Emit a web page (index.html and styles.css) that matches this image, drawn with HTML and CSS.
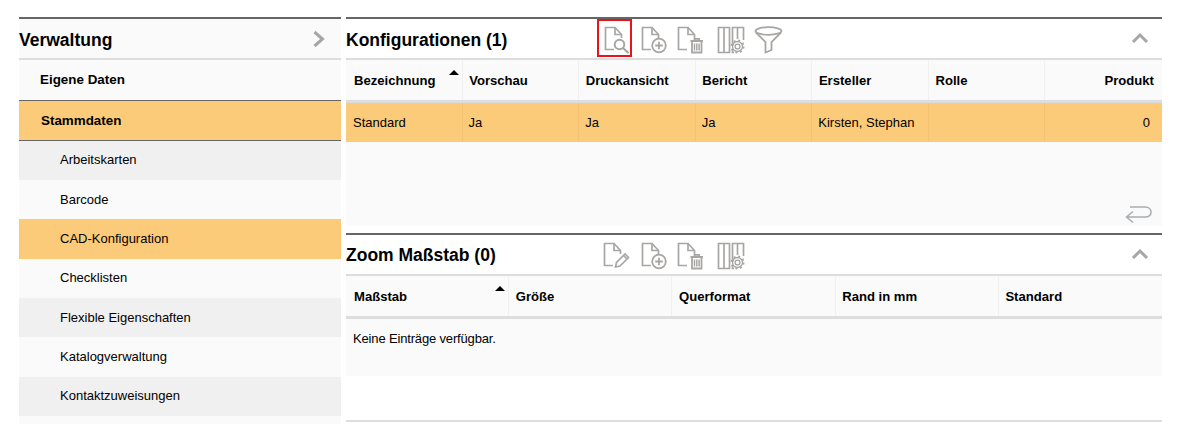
FILE: index.html
```html
<!DOCTYPE html>
<html lang="de">
<head>
<meta charset="utf-8">
<title>Verwaltung</title>
<link rel="stylesheet" href="styles.css">
</head>
<body>
<svg class="defs" width="0" height="0" aria-hidden="true">
  <defs>
    <g id="sheet" fill="none" stroke="#a8a6a4" stroke-width="1.7">
      <path d="M10 23.5H1.5V1.5H11L17.5 8.5V12"/>
      <path d="M11 1.5V8.5H17.5"/>
    </g>
    <g id="plus" fill="none" stroke="#a8a6a4" stroke-width="1.8">
      <circle cx="18" cy="19.5" r="6.8"/>
      <path d="M14.2 19.5H21.8M18 15.7V23.3"/>
    </g>
    <g id="trash" fill="none" stroke="#a8a6a4" stroke-width="1.8">
      <path d="M13.5 15H26M17.5 15V12.8H22V15"/>
      <path d="M15 15V26.5H24.5V15"/>
      <path d="M17.5 17.5V24.5M19.8 17.5V24.5M22.1 17.5V24.5" stroke-width="1.5"/>
    </g>
    <g id="cols" fill="none" stroke="#a8a6a4" stroke-width="1.7">
      <path d="M1.5 1.5H7V26.5H1.5ZM7 1.5H12.5V26.5H7Z"/>
      <path d="M15.5 20V1.5H20.5V13M20.5 1.5H26.5V14M15.5 1.5H26.5"/>
      <path d="M15.5 23V26.5H17"/>
      <circle cx="20.5" cy="20.5" r="2.4" stroke-width="1.4"/>
      <circle cx="20.5" cy="20.5" r="5" stroke-width="1.3"/>
      <circle cx="20.5" cy="20.5" r="6.2" stroke-dasharray="2 2.87" stroke-width="1.6"/>
    </g>
  </defs>
</svg>
<div class="app">
  <aside class="side">
    <div class="side-head">
      <h2 class="title">Verwaltung</h2>
      <svg class="chev" width="14" height="18" viewBox="0 0 14 18"><path d="M2.5 2L10.5 9L2.5 16" fill="none" stroke="#a6a6a6" stroke-width="3"/></svg>
    </div>
    <a class="lvl1 own">Eigene Daten</a>
    <a class="lvl1 open">Stammdaten</a>
    <a class="lvl2 even">Arbeitskarten</a>
    <a class="lvl2">Barcode</a>
    <a class="lvl2 on">CAD-Konfiguration</a>
    <a class="lvl2">Checklisten</a>
    <a class="lvl2 even">Flexible Eigenschaften</a>
    <a class="lvl2">Katalogverwaltung</a>
    <a class="lvl2 even">Kontaktzuweisungen</a>
    <div class="side-rest"></div>
  </aside>
  <main class="main">
    <section class="panel first">
      <header class="phead">
        <h2 class="title ptitle">Konfigurationen (1)</h2>
        <div class="tools tools-a">
          <span class="tool selected">
            <svg width="26" height="28" viewBox="0 0 26 28"><use href="#sheet"/><g fill="none" stroke="#a8a6a4"><circle cx="15.5" cy="18.5" r="4.8" stroke-width="2"/><path d="M19 22L24.5 27" stroke-width="2.2"/></g></svg>
          </span>
          <span class="tool step36"><svg width="28" height="28" viewBox="0 0 28 28"><use href="#sheet"/><use href="#plus"/></svg></span>
          <span class="tool step40"><svg width="28" height="28" viewBox="0 0 28 28"><use href="#sheet"/><use href="#trash"/></svg></span>
          <span class="tool"><svg width="28" height="28" viewBox="0 0 28 28"><use href="#cols"/></svg></span>
          <span class="tool"><svg width="30" height="28" viewBox="0 0 30 28"><g fill="none" stroke="#a8a6a4" stroke-width="1.8"><ellipse cx="14.5" cy="5" rx="13" ry="3.8"/><path d="M2 6.5L11.5 16V26.5L17.5 24V16L27 6.5"/></g></svg></span>
        </div>
        <svg class="collapse" width="18" height="12" viewBox="0 0 18 12"><path d="M2 10L9 3L16 10" fill="none" stroke="#a6a6a6" stroke-width="3"/></svg>
      </header>
      <div class="tbl-wrap wrap-a">
        <div class="grid seven thead">
          <div class="th">Bezeichnung<i class="sort"></i></div>
          <div class="th">Vorschau</div>
          <div class="th">Druckansicht</div>
          <div class="th">Bericht</div>
          <div class="th">Ersteller</div>
          <div class="th">Rolle</div>
          <div class="th right">Produkt</div>
        </div>
        <div class="grid seven row">
          <div class="td">Standard</div>
          <div class="td">Ja</div>
          <div class="td">Ja</div>
          <div class="td">Ja</div>
          <div class="td">Kirsten, Stephan</div>
          <div class="td"></div>
          <div class="td right">0</div>
        </div>
        <svg class="back" width="27" height="21" viewBox="0 0 27 21"><path d="M5 3H20C24 3 26 5.5 26 8C26 11 24 13 20 13H2M8 7.5L1.5 13L8 18.5" fill="none" stroke="#a9adb0" stroke-width="1.5"/></svg>
      </div>
    </section>
    <section class="panel second">
      <header class="phead phead-b">
        <h2 class="title ptitle">Zoom Maßstab (0)</h2>
        <div class="tools tools-b">
          <span class="tool step38"><svg width="28" height="28" viewBox="0 0 28 28"><use href="#sheet"/><path d="M12.5 25L13.5 20.5L22 12L25.5 15.5L17 24ZM20.5 13.5L24 17" fill="none" stroke="#a8a6a4" stroke-width="1.7"/></svg></span>
          <span class="tool step36"><svg width="28" height="28" viewBox="0 0 28 28"><use href="#sheet"/><use href="#plus"/></svg></span>
          <span class="tool step40"><svg width="28" height="28" viewBox="0 0 28 28"><use href="#sheet"/><use href="#trash"/></svg></span>
          <span class="tool"><svg width="28" height="28" viewBox="0 0 28 28"><use href="#cols"/></svg></span>
        </div>
        <svg class="collapse" width="18" height="12" viewBox="0 0 18 12"><path d="M2 10L9 3L16 10" fill="none" stroke="#a6a6a6" stroke-width="3"/></svg>
      </header>
      <div class="tbl-wrap wrap-b">
        <div class="grid five thead">
          <div class="th">Maßstab<i class="sort"></i></div>
          <div class="th">Größe</div>
          <div class="th">Querformat</div>
          <div class="th">Rand in mm</div>
          <div class="th">Standard</div>
        </div>
        <p class="empty">Keine Einträge verfügbar.</p>
      </div>
    </section>
    <div class="end-line"></div>
  </main>
</div>
</body>
</html>
```
FILE: styles.css
```css
* { box-sizing: border-box; }
html, body { margin: 0; padding: 0; height: 424px; overflow: hidden; background: #fff; }
body { font-family: "Liberation Sans", Arial, sans-serif; font-size: 13px; color: #000; }
.defs { position: absolute; }
.app { display: flex; gap: 5px; padding: 17px 21px 0 19px; height: 424px; }

.side { width: 322px; display: flex; flex-direction: column; border-top: 2px solid #666; }
.side-head { height: 41px; display: flex; align-items: center; justify-content: space-between; padding: 2px 15px 0 0; background: #fafafa; border-bottom: 2px solid #ddd; }
.title { margin: 0; font-size: 17.5px; font-weight: bold; line-height: 20px; }
.chev { display: block; margin-top: -2px; }

.lvl1, .lvl2 { display: flex; align-items: center; flex: none; font-size: 13px; }
.lvl1 { font-weight: bold; font-size: 13.4px; background: #fafafa; border-bottom: 1px solid #666; padding-left: 21px; }
.own { height: 41px; padding-bottom: 2px; }
.open { height: 39.7px; background: #fccb7a; padding-left: 22px; }
.lvl2 { height: 39.33px; padding: 0 0 1px 41px; background: #fafafa; }
.lvl2.even { background: #f0f0f0; }
.lvl2.on { background: #fccb7a; }
.side-rest { flex: 1; background: #fafafa; }

.main { width: 816px; display: flex; flex-direction: column; }
.panel { border-top: 2px solid #666; flex: none; }
.first { height: 209px; }
.second { margin-top: 7px; }
.phead { height: 41px; display: flex; align-items: center; padding-top: 2px; border-bottom: 2px solid #ddd; position: relative; }
.phead-b { padding-top: 0; }
.ptitle { flex: none; }
.tools { position: absolute; top: 7px; display: flex; align-items: flex-start; }
.tools-a { left: 258px; }
.tools-b { left: 257px; }
.tool { display: block; width: 37px; height: 28px; flex: none; }
.step36 { width: 36px; }
.step38 { width: 38px; }
.step40 { width: 40px; }
.tool svg { display: block; }
.selected { position: relative; }
.selected::after { content: ""; box-sizing: border-box; position: absolute; left: -7px; top: -7px; width: 35px; height: 38px; border: 2px solid #e8141c; }
.collapse { position: absolute; right: 13px; top: 13px; }

.wrap-a { height: 166px; background: #fafafa; position: relative; }
.wrap-b { height: 100px; background: #fafafa; }
.grid { display: grid; }
.seven { grid-template-columns: repeat(7, 1fr); }
.five { grid-template-columns: repeat(5, 1fr); }
.thead { height: 43px; border-bottom: 3px solid #ddd; }
.th { position: relative; padding: 13px 6.6px 0; font-weight: bold; font-size: 13.1px; line-height: 16px; border-right: 1px solid #f0f0f0; }
.th:first-child { padding-left: 8px; }
.th:last-child { border-right: 0; padding-right: 8px; }
.right { text-align: right; }
.sort { position: absolute; right: 3px; top: 10px; width: 0; height: 0; border: 5px solid transparent; border-top: 0; border-bottom: 5px solid #000; }
.row { height: 39px; background: #fccb7a; }
.td { padding: 12px 6px 0; line-height: 15px; border-right: 1px solid #f3c273; }
.td:first-child { padding-left: 7px; }
.td:last-child { border-right: 0; padding-right: 12px; }
.back { position: absolute; right: 10px; top: 144px; display: block; }
.empty { margin: 0; padding: 12px 7px; line-height: 15px; letter-spacing: -.16px; }
.end-line { height: 2px; margin-top: 44px; background: #ddd; flex: none; }
```
